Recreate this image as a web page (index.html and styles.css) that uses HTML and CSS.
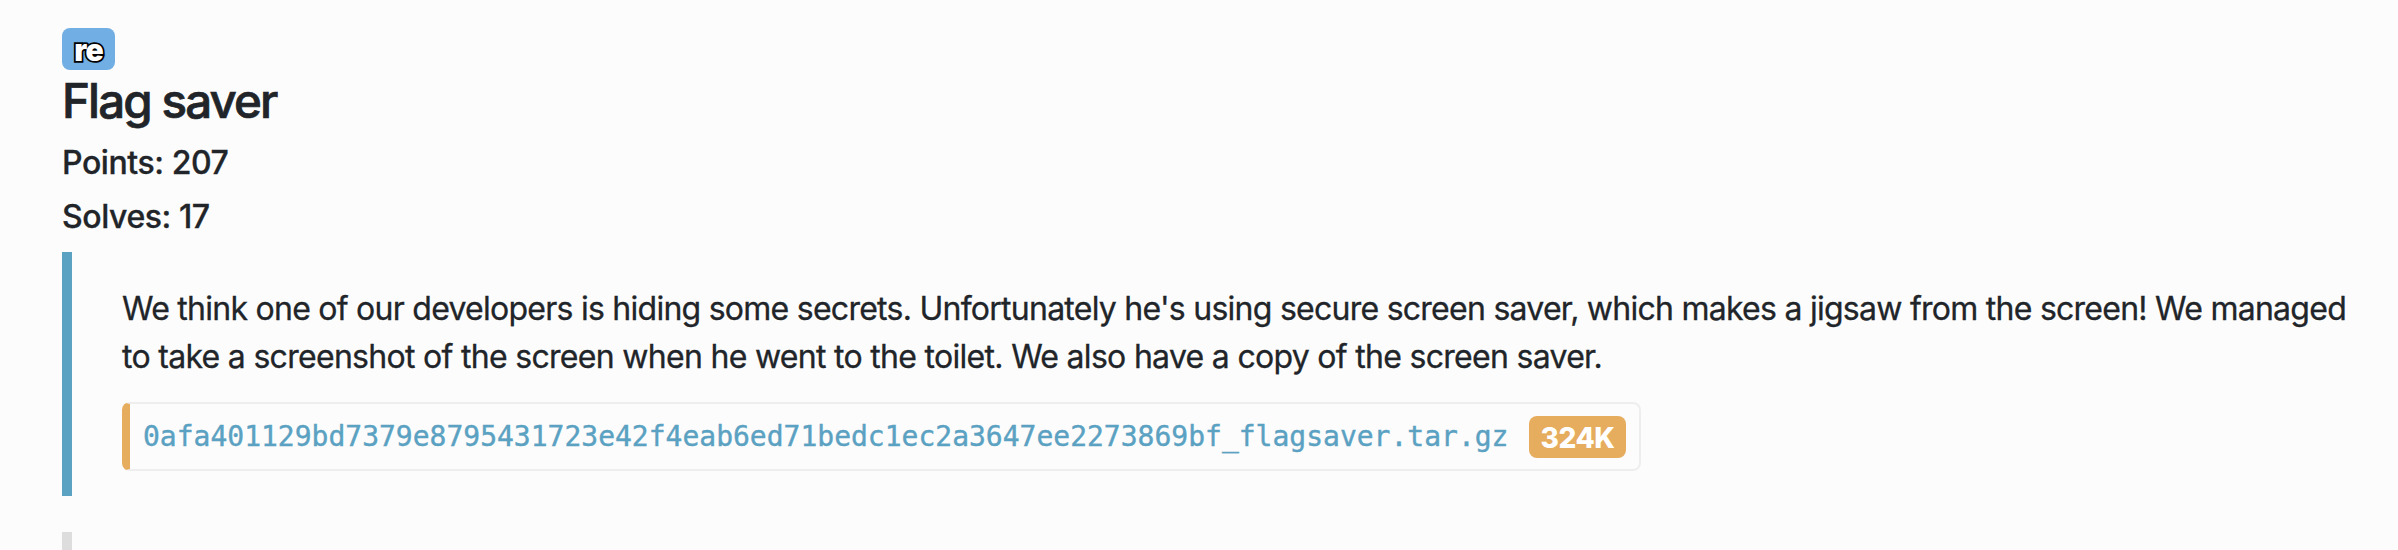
FILE: index.html
```html
<!DOCTYPE html>
<html lang="en">
<head>
<meta charset="utf-8">
<title>Flag saver</title>
<link rel="stylesheet" href="styles.css">
</head>
<body>
<main class="challenge">
  <span class="tag">re</span>
  <h1 class="title">Flag saver</h1>
  <p class="meta points">Points: 207</p>
  <p class="meta solves">Solves: 17</p>
  <section class="description">
    <p class="line line-one">We think one of our developers is hiding some secrets. Unfortunately he's using secure screen saver, which makes a jigsaw from the screen! We managed</p>
    <p class="line line-two">to take a screenshot of the screen when he went to the toilet. We also have a copy of the screen saver.</p>
    <a class="file"><span class="name">0afa401129bd7379e8795431723e42f4eab6ed71bedc1ec2a3647ee2273869bf_flagsaver.tar.gz</span><span class="size">324K</span></a>
  </section>
  <section class="next"></section>
</main>
</body>
</html>
```
FILE: styles.css
```css
* { box-sizing: border-box; }
body { margin: 0; background: #fcfcfc; color: #212529; font-family: Inter, sans-serif; overflow: hidden; }
p, h1 { margin: 0; }
.challenge { display: flex; flex-direction: column; align-items: flex-start; padding: 28px 0 0 62px; height: 550px; }
.tag { width: 53px; height: 42px; border-radius: 8px; background: #71aee3; color: #fff; font: 900 30px/45px Inter, sans-serif; letter-spacing: -0.8px; text-align: center; -webkit-text-stroke: 3.5px #000; paint-order: stroke fill; }
.title { font-size: 47.5px; line-height: 62px; font-weight: 500; letter-spacing: -1.9px; white-space: nowrap; -webkit-text-stroke: 0.7px #212529; }
.meta { font-size: 32px; font-weight: 500; line-height: 54px; letter-spacing: -0.42px; -webkit-text-stroke: 0.3px #212529; }
.points { margin-top: 4px; }
.description { width: 2336px; height: 244px; flex: none; border-left: 10px solid #5aa1c2; padding: 33px 0 0 50px; margin-top: 8px; }
.line { font-size: 32px; line-height: 48px; font-weight: 400; white-space: nowrap; letter-spacing: -0.74px; -webkit-text-stroke: 0.3px #212529; }
.line-two { letter-spacing: -0.7px; }
.file { display: flex; align-items: center; width: 1519px; height: 69px; margin-top: 21px; padding-left: 13px; border: 2px solid #eee; border-left: 8px solid #e6ad5f; border-radius: 8px; color: #5aa1c2; }
.name { width: 1386px; font: 28px "DejaVu Sans Mono", monospace; white-space: nowrap; -webkit-text-stroke: 0.4px #5aa1c2; }
.size { width: 97px; height: 42px; margin-top: 1px; border-radius: 8px; background: #e6ad5f; color: #fff; font-size: 28px; font-weight: 800; letter-spacing: -0.4px; line-height: 44px; text-align: center; }
.next { width: 10px; height: 18px; margin-top: 36px; background: #ddd; }
```
